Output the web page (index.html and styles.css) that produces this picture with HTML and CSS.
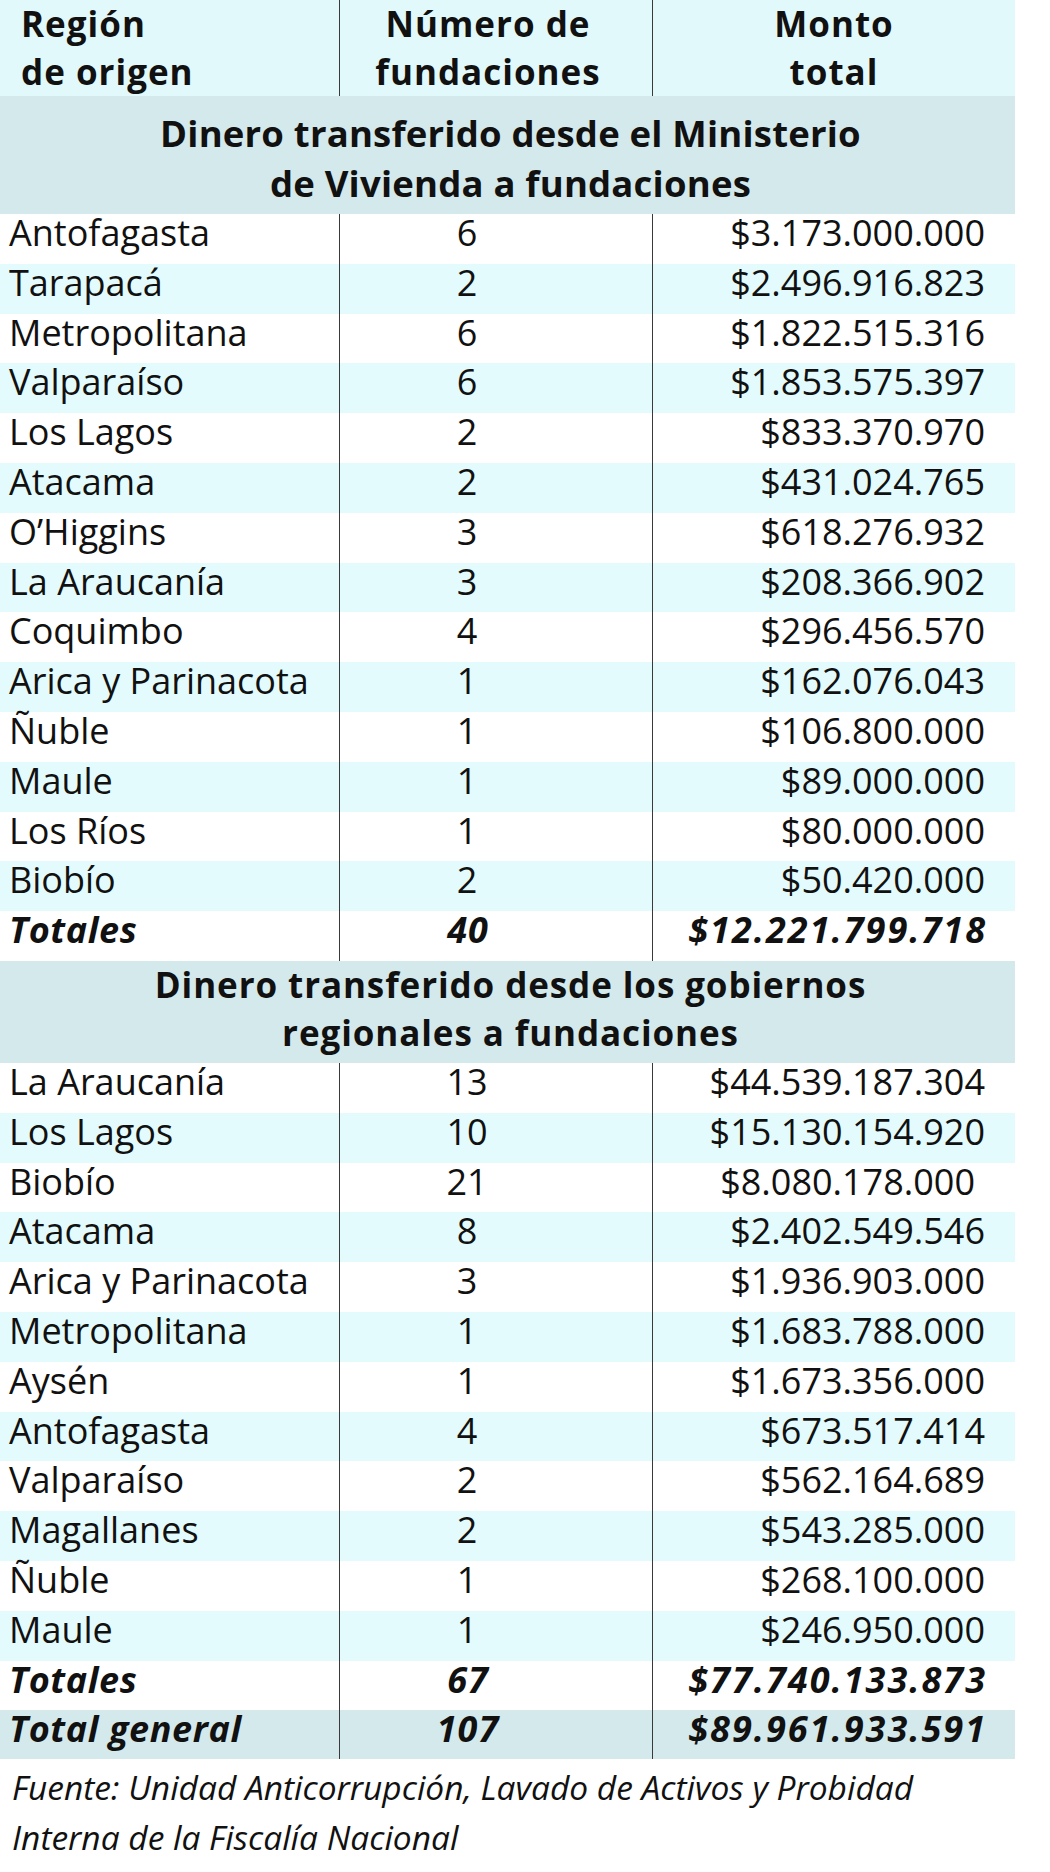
FILE: index.html
```html
<!DOCTYPE html>
<html lang="es">
<head>
<meta charset="utf-8">
<title>Dinero transferido a fundaciones</title>
<link rel="stylesheet" href="styles.css">
</head>
<body>
<div class="table">
  <div class="row head">
    <div class="c-region">Región<br>de origen</div>
    <div class="c-num">Número de<br>fundaciones</div>
    <div class="c-amt">Monto<br>total</div>
  </div>

  <div class="section s1">Dinero transferido desde el Ministerio<br>de Vivienda a fundaciones</div>

  <div class="row"><div class="c-region">Antofagasta</div><div class="c-num">6</div><div class="c-amt">$3.173.000.000</div></div>
  <div class="row alt"><div class="c-region">Tarapacá</div><div class="c-num">2</div><div class="c-amt">$2.496.916.823</div></div>
  <div class="row"><div class="c-region">Metropolitana</div><div class="c-num">6</div><div class="c-amt">$1.822.515.316</div></div>
  <div class="row alt"><div class="c-region">Valparaíso</div><div class="c-num">6</div><div class="c-amt">$1.853.575.397</div></div>
  <div class="row"><div class="c-region">Los Lagos</div><div class="c-num">2</div><div class="c-amt">$833.370.970</div></div>
  <div class="row alt"><div class="c-region">Atacama</div><div class="c-num">2</div><div class="c-amt">$431.024.765</div></div>
  <div class="row"><div class="c-region">O’Higgins</div><div class="c-num">3</div><div class="c-amt">$618.276.932</div></div>
  <div class="row alt"><div class="c-region">La Araucanía</div><div class="c-num">3</div><div class="c-amt">$208.366.902</div></div>
  <div class="row"><div class="c-region">Coquimbo</div><div class="c-num">4</div><div class="c-amt">$296.456.570</div></div>
  <div class="row alt"><div class="c-region">Arica y Parinacota</div><div class="c-num">1</div><div class="c-amt">$162.076.043</div></div>
  <div class="row"><div class="c-region">Ñuble</div><div class="c-num">1</div><div class="c-amt">$106.800.000</div></div>
  <div class="row alt"><div class="c-region">Maule</div><div class="c-num">1</div><div class="c-amt">$89.000.000</div></div>
  <div class="row"><div class="c-region">Los Ríos</div><div class="c-num">1</div><div class="c-amt">$80.000.000</div></div>
  <div class="row alt"><div class="c-region">Biobío</div><div class="c-num">2</div><div class="c-amt">$50.420.000</div></div>
  <div class="row total"><div class="c-region">Totales</div><div class="c-num">40</div><div class="c-amt">$12.221.799.718</div></div>

  <div class="section s2">Dinero transferido desde los gobiernos<br>regionales a fundaciones</div>

  <div class="row"><div class="c-region">La Araucanía</div><div class="c-num">13</div><div class="c-amt">$44.539.187.304</div></div>
  <div class="row alt"><div class="c-region">Los Lagos</div><div class="c-num">10</div><div class="c-amt">$15.130.154.920</div></div>
  <div class="row"><div class="c-region">Biobío</div><div class="c-num">21</div><div class="c-amt short">$8.080.178.000</div></div>
  <div class="row alt"><div class="c-region">Atacama</div><div class="c-num">8</div><div class="c-amt">$2.402.549.546</div></div>
  <div class="row"><div class="c-region">Arica y Parinacota</div><div class="c-num">3</div><div class="c-amt">$1.936.903.000</div></div>
  <div class="row alt"><div class="c-region">Metropolitana</div><div class="c-num">1</div><div class="c-amt">$1.683.788.000</div></div>
  <div class="row"><div class="c-region">Aysén</div><div class="c-num">1</div><div class="c-amt">$1.673.356.000</div></div>
  <div class="row alt"><div class="c-region">Antofagasta</div><div class="c-num">4</div><div class="c-amt">$673.517.414</div></div>
  <div class="row"><div class="c-region">Valparaíso</div><div class="c-num">2</div><div class="c-amt">$562.164.689</div></div>
  <div class="row alt"><div class="c-region">Magallanes</div><div class="c-num">2</div><div class="c-amt">$543.285.000</div></div>
  <div class="row"><div class="c-region">Ñuble</div><div class="c-num">1</div><div class="c-amt">$268.100.000</div></div>
  <div class="row alt"><div class="c-region">Maule</div><div class="c-num">1</div><div class="c-amt">$246.950.000</div></div>
  <div class="row total"><div class="c-region">Totales</div><div class="c-num">67</div><div class="c-amt">$77.740.133.873</div></div>
  <div class="row total grand"><div class="c-region">Total general</div><div class="c-num">107</div><div class="c-amt">$89.961.933.591</div></div>
</div>
<p class="source">Fuente: Unidad Anticorrupción, Lavado de Activos y Probidad<br>Interna de la Fiscalía Nacional</p>
</body>
</html>
```
FILE: styles.css
```css
html, body {
  margin: 0;
  padding: 0;
  background: #ffffff;
}

body {
  font-family: "Open Sans", "Noto Sans", "Liberation Sans", sans-serif;
  color: #111111;
}

.table {
  width: 1015px;
}

.row {
  display: grid;
  grid-template-columns: 340px 313px 362px;
  height: 49.8px;
  font-size: 36px;
  line-height: 38px;
  background: #ffffff;
}

.row.alt {
  background: #e4fbfd;
}

.c-region,
.c-num {
  border-right: 1px solid #3a3a3a;
}

.c-region {
  padding-left: 9px;
  white-space: nowrap;
}

.c-num {
  text-align: center;
  padding-right: 58px;
}

.c-amt {
  text-align: right;
  padding-right: 30px;
  white-space: nowrap;
}

.c-amt.short {
  padding-right: 40px;
}

.row.head {
  height: 96px;
  background: #e2f9fb;
  font-weight: 700;
  font-size: 35px;
  line-height: 48px;
  letter-spacing: 1px;
}

.row.head .c-region {
  padding-left: 21px;
}

.row.head .c-num {
  padding-right: 16px;
  white-space: nowrap;
}

.row.head .c-amt {
  text-align: center;
  padding-right: 0;
}

.row.total {
  font-weight: 700;
  font-style: italic;
}

.row.total .c-region {
  letter-spacing: 0.6px;
}

.row.total .c-amt {
  padding-right: 28px;
  letter-spacing: 2px;
}

.row.total .c-num {
  padding-right: 56px;
  letter-spacing: 1px;
}

.row.grand {
  background: #d4e9eb;
  height: 49px;
}

.section {
  background: #d4e9eb;
  font-weight: 700;
  text-align: center;
  padding-left: 6px;
  white-space: nowrap;
  box-sizing: border-box;
}

.section.s1 {
  height: 118px;
  padding-top: 12px;
  font-size: 36.5px;
  line-height: 50px;
  letter-spacing: 0.2px;
}

.section.s2 {
  height: 102px;
  padding-top: 0;
  font-size: 35px;
  line-height: 47.7px;
  letter-spacing: 0.9px;
}

.source {
  margin: 0;
  padding: 3px 0 0 12px;
  font-style: italic;
  font-size: 33.5px;
  line-height: 50px;
}
```
